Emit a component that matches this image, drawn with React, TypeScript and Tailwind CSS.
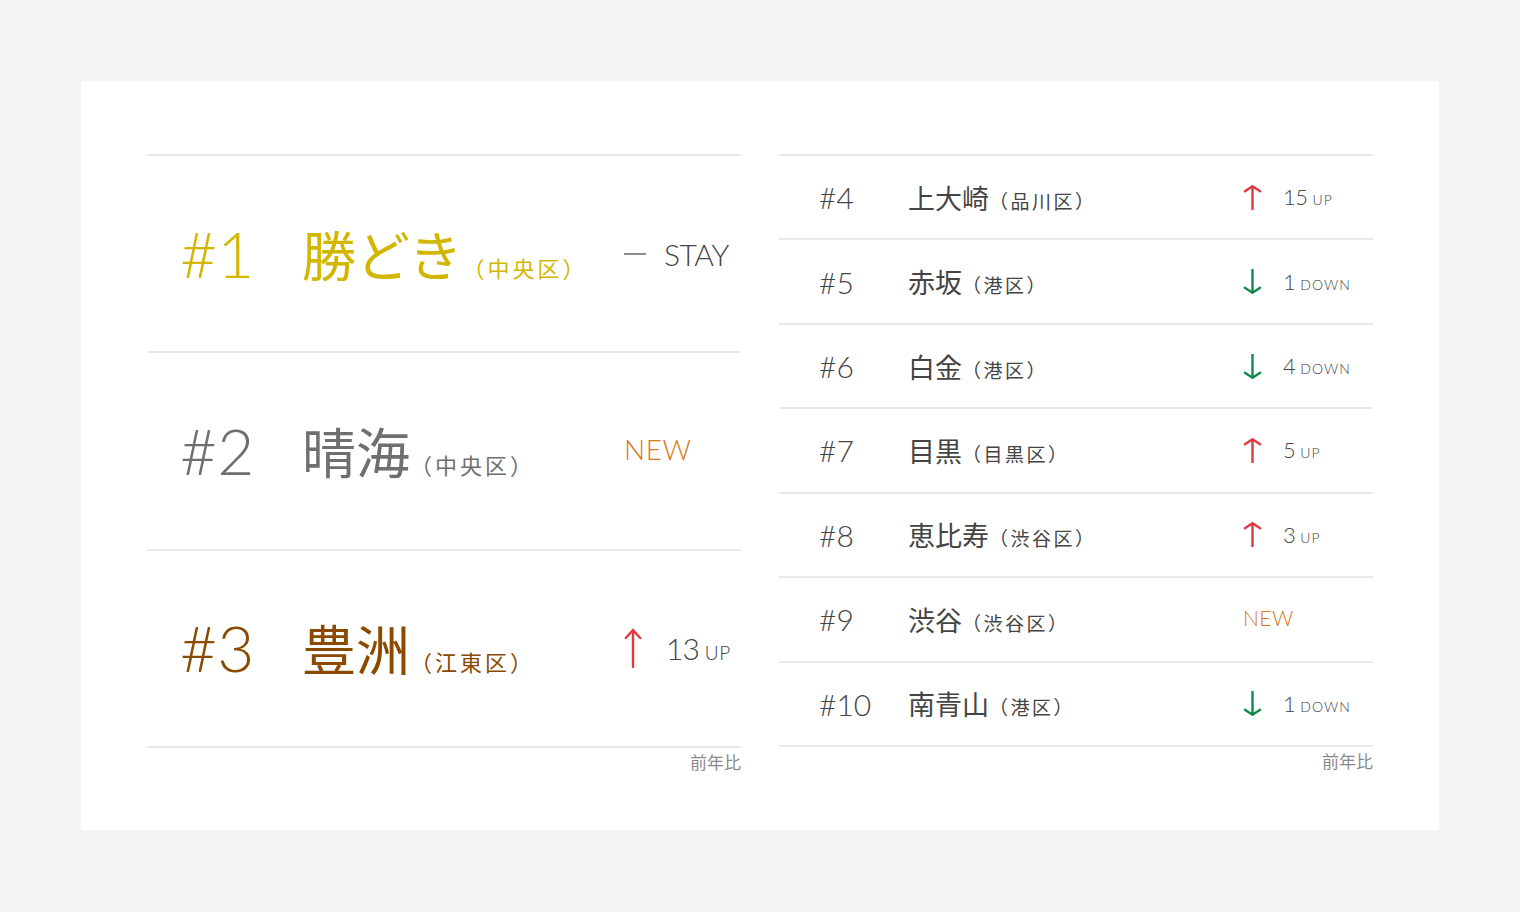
import React from "react";

type Trend = { kind: "up" | "down"; n: number } | { kind: "new" } | { kind: "stay" };

type Area = { rank: number; name: string; ward: string; trend: Trend };

const latin = "font-['Lato','Noto_Sans','Noto_Sans_CJK_JP',sans-serif]";
const jp = "font-['Noto_Sans_CJK_JP','Noto_Sans',sans-serif] [text-spacing-trim:space-all]";

const top3: (Area & { color: string })[] = [
  { rank: 1, name: "勝どき", ward: "（中央区）", trend: { kind: "stay" }, color: "text-[#d3b600]" },
  { rank: 2, name: "晴海", ward: "（中央区）", trend: { kind: "new" }, color: "text-[#6f6f6f]" },
  { rank: 3, name: "豊洲", ward: "（江東区）", trend: { kind: "up", n: 13 }, color: "text-[#8b4a00]" },
];

const rest: Area[] = [
  { rank: 4, name: "上大崎", ward: "（品川区）", trend: { kind: "up", n: 15 } },
  { rank: 5, name: "赤坂", ward: "（港区）", trend: { kind: "down", n: 1 } },
  { rank: 6, name: "白金", ward: "（港区）", trend: { kind: "down", n: 4 } },
  { rank: 7, name: "目黒", ward: "（目黒区）", trend: { kind: "up", n: 5 } },
  { rank: 8, name: "恵比寿", ward: "（渋谷区）", trend: { kind: "up", n: 3 } },
  { rank: 9, name: "渋谷", ward: "（渋谷区）", trend: { kind: "new" } },
  { rank: 10, name: "南青山", ward: "（港区）", trend: { kind: "down", n: 1 } },
];

function ArrowUp({ className }: { className?: string }) {
  return (
    <svg viewBox="0 0 20 40" className={className} fill="none" aria-hidden="true" preserveAspectRatio="none">
      <path d="M10 39V2M2 10l8-8 8 8" stroke="currentColor" strokeWidth="2.4" strokeLinecap="round" strokeLinejoin="round" vectorEffect="non-scaling-stroke" />
    </svg>
  );
}

function ArrowDown({ className }: { className?: string }) {
  return (
    <svg viewBox="0 0 20 40" className={className} fill="none" aria-hidden="true" preserveAspectRatio="none">
      <path d="M10 1v37M2 30l8 8 8-8" stroke="currentColor" strokeWidth="2.4" strokeLinecap="round" strokeLinejoin="round" vectorEffect="non-scaling-stroke" />
    </svg>
  );
}

function BigTrend({ trend }: { trend: Trend }) {
  if (trend.kind === "stay") {
    return (
      <div className="flex items-center">
        <span className="block h-[2px] w-[22px] bg-[#8c8c8c]" />
        <span className={`${latin} ml-[18px] text-[30px] font-light leading-none tracking-[-0.5px] text-[#444]`}>STAY</span>
      </div>
    );
  }
  if (trend.kind === "new") {
    return <span className={`${latin} text-[28px] font-light leading-none tracking-[0.5px] text-[#d97a1c]`}>NEW</span>;
  }
  return (
    <div className="flex items-center">
      <ArrowUp className="h-[40px] w-[18px] text-[#e0393f]" />
      <span className={`${latin} ml-[24px] flex items-baseline font-light leading-none text-[#444]`}>
        <span className="text-[30px] tracking-[-1px]">{trend.n}</span>
        <span className="ml-[6px] text-[19px] tracking-[0.5px]">UP</span>
      </span>
    </div>
  );
}

function SmallTrend({ trend }: { trend: Trend }) {
  if (trend.kind === "new") {
    return <span className={`${latin} text-[21px] font-light leading-none tracking-[0.5px] text-[#d97a1c]`}>NEW</span>;
  }
  if (trend.kind === "stay") return null;
  const up = trend.kind === "up";
  return (
    <div className="flex items-center">
      {up ? (
        <ArrowUp className="h-[25px] w-[19px] text-[#e0393f]" />
      ) : (
        <ArrowDown className="h-[25px] w-[19px] text-[#128a4c]" />
      )}
      <span className={`${latin} ml-[21px] flex items-baseline font-light leading-none text-[#444]`}>
        <span className="text-[22px] tracking-[-0.5px]">{trend.n}</span>
        <span className="ml-[5px] text-[14px] tracking-[1px]">{up ? "UP" : "DOWN"}</span>
      </span>
    </div>
  );
}

function Note() {
  return <p className={`${jp} mt-[3px] text-right text-[17px] leading-[22px] text-[#8a8a8a]`}>前年比</p>;
}

export default function App() {
  return (
    <div className="min-h-[912px] w-full bg-[#f5f5f5] px-[81px] pt-[81px]">
      <div className="flex h-[749px] w-[1358px] gap-[38px] bg-white pl-[66px] pr-[66px] pt-[73px]">
        <div className="w-[594px]">
          <div className="flex h-[594px] flex-col border-b-2 border-[#e8e8e8]">
            {top3.map((a) => (
              <div key={a.rank} className="flex flex-1 items-center border-t-2 border-[#e8e8e8] pl-[33px]">
                <span className={`${latin} w-[122px] text-[64px] font-light leading-none ${a.color}`}>#{a.rank}</span>
                <div className={`${jp} flex flex-1 items-baseline ${a.color}`}>
                  <span className="text-[54px] leading-none">{a.name}</span>
                  <span className="mb-[2px] text-[22px] leading-none tracking-[3px]">{a.ward}</span>
                </div>
                <div className="w-[117px]">
                  <BigTrend trend={a.trend} />
                </div>
              </div>
            ))}
          </div>
          <Note />
        </div>

        <div className="w-[594px]">
          <div className="flex h-[593px] flex-col border-b-2 border-[#e8e8e8]">
            {rest.map((a) => (
              <div key={a.rank} className="flex flex-1 items-center border-t-2 border-[#e8e8e8] pl-[40px]">
                <span className={`${latin} w-[89px] text-[30px] font-light leading-none text-[#444]`}>#{a.rank}</span>
                <div className={`${jp} flex flex-1 items-baseline text-[#444]`}>
                  <span className="text-[27px] leading-none">{a.name}</span>
                  <span className="text-[19px] leading-none tracking-[2.5px]">{a.ward}</span>
                </div>
                <div className="w-[130px]">
                  <SmallTrend trend={a.trend} />
                </div>
              </div>
            ))}
          </div>
          <Note />
        </div>
      </div>
    </div>
  );
}
